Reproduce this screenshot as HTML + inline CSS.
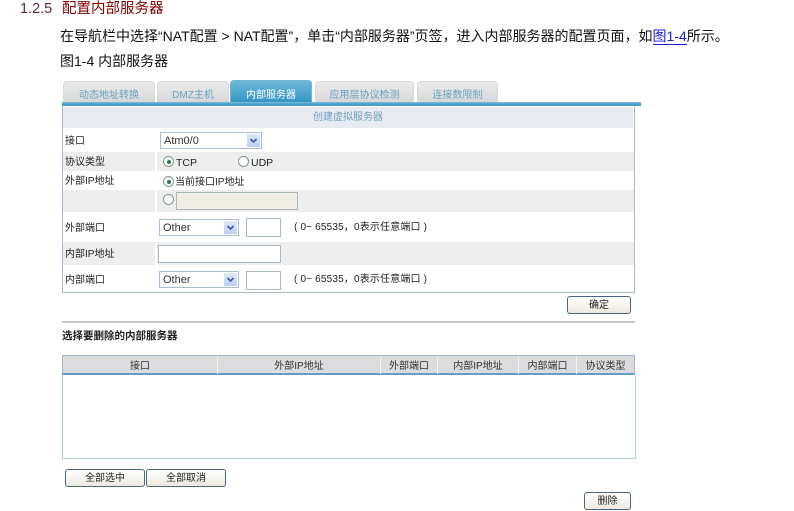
<!DOCTYPE html>
<html><head><meta charset="utf-8">
<style>
html,body{margin:0;padding:0;background:#fff;width:794px;height:511px;overflow:hidden}
body{position:relative;font-family:"Liberation Sans","Noto Sans CJK SC",sans-serif}
.a{position:absolute;white-space:nowrap}
#ui{position:absolute;left:0;top:0;width:794px;height:511px;filter:blur(.3px);color:#222}
.tab{position:absolute;top:81px;height:22px;background:linear-gradient(#ebebeb,#d4d6d8);border:1px solid #d9d9d9;border-bottom:0;border-radius:4px 4px 0 0;box-sizing:border-box;text-align:center;font-size:10px;line-height:27px;color:#6aa2c2}
.row{position:absolute;left:63px;width:571px;background:#eeeeee}
.lab{position:absolute;left:65px;font-size:10px;line-height:13px;color:#222;white-space:nowrap}
.sel{position:absolute;background:#fff;border:1px solid #a9bfd0;box-sizing:border-box;font-size:11px;color:#333;line-height:16px;padding-left:3px}
.sel i{position:absolute;right:1px;top:1px;bottom:1px;width:13px;background:linear-gradient(#dfe9fb,#bccff3)}
.sel svg{position:absolute;right:3px;top:5px}
.inp{position:absolute;background:#fff;border:1px solid #a9b9c4;box-sizing:border-box}
.rad{position:absolute;width:11px;height:11px;border:1px solid #7f9a8c;border-radius:50%;box-sizing:border-box;background:#fff}
.rad.on::after{content:"";position:absolute;left:2.5px;top:2.5px;width:4px;height:4px;border-radius:50%;background:#2c7a4a}
.btn{position:absolute;box-sizing:border-box;border:1px solid #4a6680;border-radius:3px;background:linear-gradient(#fff,#ece9df);text-align:center;font-size:10px;line-height:17px;color:#222}
.th{position:absolute;top:356px;height:18px;font-size:10px;line-height:21px;text-align:center;color:#333;border-right:1px solid #f4f4f4;box-sizing:border-box}
.note{left:294px;font-size:10px;line-height:14px;letter-spacing:.17px;color:#222}
</style></head>
<body>
<div class="a" style="left:20px;top:1px;font-size:14.5px;line-height:17px;color:#5c2a3a">1.2.5</div>
<div class="a" style="left:62px;top:1px;font-size:14.5px;line-height:17px;color:#800000">配置内部服务器</div>
<div class="a" style="left:60px;top:27px;font-size:14px;line-height:18px;color:#111">在导航栏中选择“NAT配置 &gt; NAT配置”，单击“内部服务器”页签，进入内部服务器的配置页面，如<span style="color:#1a1ae6;border-bottom:1px solid #1a1ae6">图1-4</span>所示。</div>
<div class="a" style="left:60px;top:52px;font-size:14px;line-height:18px;color:#111">图1-4 内部服务器</div>

<div id="ui">
<div class="tab" style="left:63px;width:92px">动态地址转换</div>
<div class="tab" style="left:157px;width:72px">DMZ主机</div>
<div class="tab" style="left:315px;width:99px">应用层协议检测</div>
<div class="tab" style="left:417px;width:81px">连接数限制</div>
<div class="tab" style="left:230px;width:82px;top:80px;height:24px;background:linear-gradient(#6db8d8,#2f93c4);border-color:#6fb4d2;color:#fff;font-size:10px;line-height:29px">内部服务器</div>
<div class="a" style="left:62px;top:102px;width:579px;height:4px;background:linear-gradient(#7fbfdc,#4a9fc8 50%)"></div>

<div class="a" style="left:62px;top:106px;width:573px;height:187px;box-sizing:border-box;border:1px solid #a9bccb;border-top:0"></div>
<div class="a" style="left:63px;top:107px;width:570px;height:21px;background:#e8eaf2;text-align:center;font-size:10px;line-height:21px;color:#6f9fbe">创建虚拟服务器</div>

<div class="row" style="top:152px;height:19px"></div>
<div class="row" style="top:190px;height:22px"></div>
<div class="row" style="top:242px;height:23px"></div>
<div class="a" style="left:155px;top:129px;width:2px;height:163px;background:#fff"></div>

<div class="lab" style="top:135px">接口</div>
<div class="lab" style="top:156px">协议类型</div>
<div class="lab" style="top:175px">外部IP地址</div>
<div class="lab" style="top:222px">外部端口</div>
<div class="lab" style="top:248px">内部IP地址</div>
<div class="lab" style="top:274px">内部端口</div>

<div class="sel" style="left:160px;top:132px;width:102px;height:17px">Atm0/0<i></i><svg width="9" height="6"><path d="M1.500 1l3 3 3-3" fill="none" stroke="#3a5a98" stroke-width="1.600"/></svg></div>
<div class="rad on" style="left:163px;top:156px"></div>
<div class="a" style="left:176px;top:156px;font-size:10.5px;line-height:14px">TCP</div>
<div class="rad" style="left:238px;top:156px"></div>
<div class="a" style="left:251px;top:156px;font-size:10.5px;line-height:14px">UDP</div>
<div class="rad on" style="left:163px;top:176px"></div>
<div class="a" style="left:175px;top:176px;font-size:10px;line-height:14px">当前接口IP地址</div>
<div class="rad" style="left:163px;top:194px"></div>
<div class="inp" style="left:176px;top:192px;width:122px;height:18px;background:#f0ede4;border-color:#a9b9b9"></div>

<div class="sel" style="left:159px;top:219px;width:80px;height:17px;line-height:17px">Other<i></i><svg width="9" height="6"><path d="M1.500 1l3 3 3-3" fill="none" stroke="#3a5a98" stroke-width="1.600"/></svg></div>
<div class="inp" style="left:246px;top:218px;width:35px;height:19px"></div>
<div class="a note" style="top:221px">( 0− 65535，0表示任意端口 )</div>
<div class="inp" style="left:158px;top:245px;width:123px;height:18px"></div>
<div class="sel" style="left:159px;top:271px;width:80px;height:17px;line-height:17px">Other<i></i><svg width="9" height="6"><path d="M1.500 1l3 3 3-3" fill="none" stroke="#3a5a98" stroke-width="1.600"/></svg></div>
<div class="inp" style="left:246px;top:271px;width:35px;height:19px"></div>
<div class="a note" style="top:273px">( 0− 65535，0表示任意端口 )</div>

<div class="btn" style="left:567px;top:296px;width:64px;height:18px">确定</div>
<div class="a" style="left:62px;top:321px;width:573px;height:2px;background:#c9c9c9"></div>
<div class="a" style="left:62px;top:330px;font-size:10.500px;font-weight:bold;line-height:13px;color:#222">选择要删除的内部服务器</div>

<div class="a" style="left:62px;top:355px;width:573px;height:20px;box-sizing:border-box;background:#dcdcdf;border:1px solid #a6b6cc;border-bottom:2px solid #5f9fcf"></div>
<div class="th" style="left:63px;width:155px">接口</div>
<div class="th" style="left:218px;width:163px">外部IP地址</div>
<div class="th" style="left:381px;width:57px">外部端口</div>
<div class="th" style="left:438px;width:81px">内部IP地址</div>
<div class="th" style="left:519px;width:58px">内部端口</div>
<div class="th" style="left:577px;width:57px;border:0">协议类型</div>
<div class="a" style="left:62px;top:375px;width:574px;height:84px;box-sizing:border-box;border:1px solid #a9d0e0;border-top:0"></div>

<div class="btn" style="left:65px;top:469px;width:80px;height:18px">全部选中</div>
<div class="btn" style="left:146px;top:469px;width:80px;height:18px">全部取消</div>
<div class="btn" style="left:584px;top:492px;width:47px;height:18px">删除</div>
</div>
</body></html>
